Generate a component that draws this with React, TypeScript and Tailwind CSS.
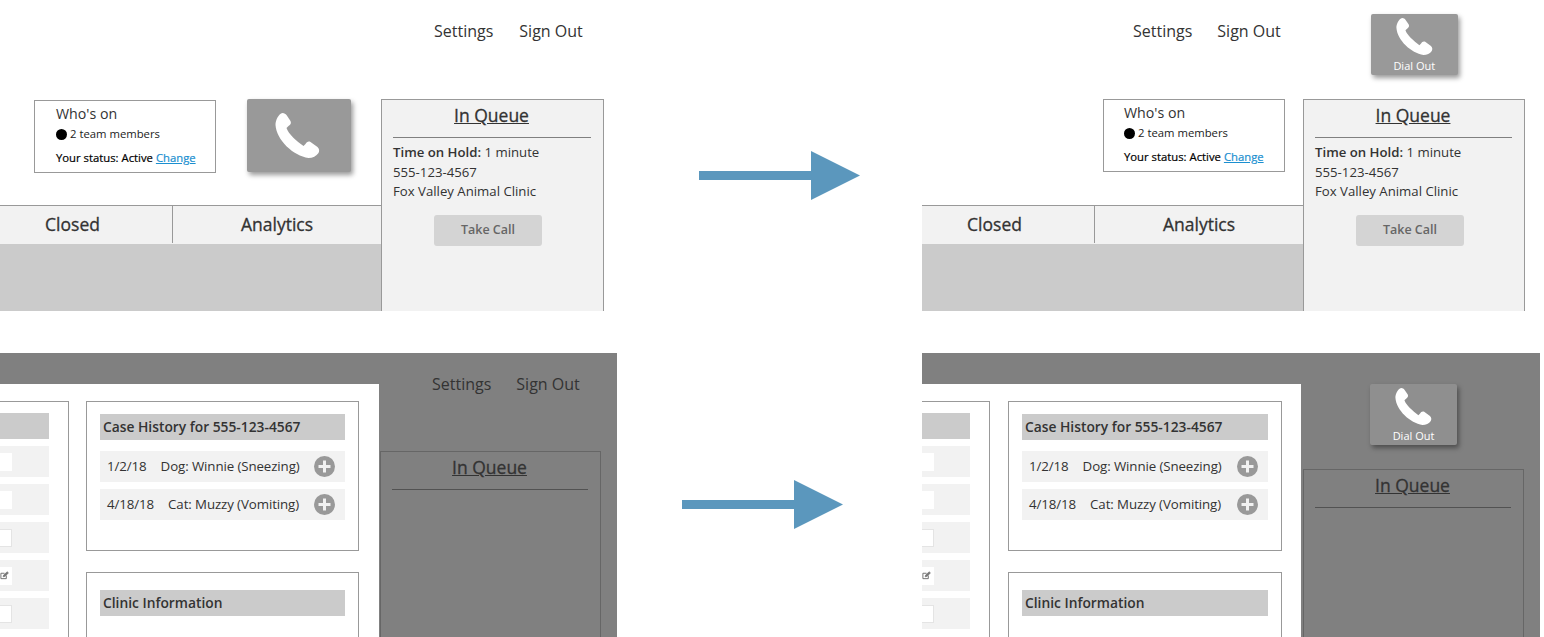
import React from "react";

const PhoneIcon = ({ className }: { className: string }) => (
  <svg viewBox="0 0 44 45" className={className} fill="currentColor">
    <path d="M7 0C9 0 10 1 11 2L15 8C16 10 15 12 13 13L11 15C13 21 21 28 28 33L30 31C31 29 33 28 35 29L42 34C44 36 44 38 43 40C41 43 37 45 33 45C18 43 1 27 0 12C0 7 3 1 7 0Z" />
  </svg>
);

const PlusIcon = () => (
  <svg viewBox="0 0 21 21" className="size-[21px] flex-none">
    <circle cx="10.5" cy="10.5" r="10.5" fill="#999999" />
    <path d="M9 4.5h3V9h4.5v3H12v4.5H9V12H4.5V9H9z" fill="#f2f2f2" />
  </svg>
);

const PencilIcon = () => (
  <svg viewBox="0 0 10 10" className="mr-[3px] size-[11px]" fill="none" stroke="#666666">
    <path d="M1 2.500h4M1 2.500v6h6V5" strokeWidth="1" />
    <path d="M3.500 6.500l.5-2L8 .8l1.400 1.400L5.500 6z" fill="#777777" strokeWidth="0.6" />
  </svg>
);

const Arrow = ({ className }: { className: string }) => (
  <svg viewBox="0 0 161 49" className={className}>
    <path d="M0 20h112V0l49 24.500-49 24.500V29H0z" fill="#5b97bd" />
  </svg>
);

const Nav = ({ className }: { className: string }) => (
  <div className={`flex text-[16px] leading-[22px] ${className}`}>
    <span>Settings</span>
    <span>Sign Out</span>
  </div>
);

const WhosOn = ({ className }: { className: string }) => (
  <div className={`h-[73px] flex-none border border-[#999999] bg-white pt-[3px] ${className}`}>
    <div className="text-[14.200px] leading-[20px] text-[#333333]">Who's on</div>
    <div className="mt-[2px] flex h-[16px] items-center gap-[3px] text-[11.300px] text-[#222222]">
      <span className="size-[11px] rounded-full bg-black" />
      2 team members
    </div>
    <div className="mt-[8px] text-[11.300px] leading-[16px] text-black [-webkit-text-stroke:0.2px]">
      Your status: Active{" "}
      <span className="text-[#1b8fd0] underline">Change</span>
    </div>
  </div>
);

const Tabs = () => (
  <>
    <div className="flex h-[40px] flex-none border-t border-b border-t-[#999999] border-b-[#cbcbcb] bg-[#f2f2f2] pb-px text-[17.500px] text-[#333333] [-webkit-text-stroke:0.3px]">
      <div className="flex w-[173px] items-center justify-center border-r border-[#999999] pr-[27px]">Closed</div>
      <div className="flex flex-1 items-center justify-center">Analytics</div>
    </div>
    <div className="flex-1 bg-[#cbcbcb]" />
  </>
);

const QueueTitle = () => (
  <>
    <div className="pr-[2px] text-center text-[17.500px] leading-[25px] underline [-webkit-text-stroke:0.3px]">In Queue</div>
    <div className="ml-[11px] mr-[12px] mt-[9px] border-t border-current opacity-60" />
  </>
);

const Queue = ({ className }: { className: string }) => (
  <div className={`h-[212px] flex-none border border-b-0 border-[#999999] bg-[#f2f2f2] pt-[3px] text-[#333333] ${className}`}>
    <QueueTitle />
    <div className="mt-[5px] pl-[11px] text-[13.200px] leading-[19.500px]">
      <div>
        <span className="font-semibold">Time on Hold:</span> 1 minute
      </div>
      <div>555-123-4567</div>
      <div>Fox Valley Animal Clinic</div>
    </div>
    <div className="ml-[52px] mt-[13px] flex h-[31px] w-[108px] items-center justify-center rounded-[3px] bg-[#d4d4d4] pt-px text-[12.500px] font-semibold text-[#666666]">
      Take Call
    </div>
  </div>
);

const DialOut = ({ tone, className }: { tone: string; className: string }) => (
  <div className={`flex h-[61px] w-[87px] flex-none flex-col items-center rounded-[2px] pt-[4px] text-white shadow-[2px_3px_5px_rgba(0,0,0,0.4)] ${tone} ${className}`}>
    <PhoneIcon className="h-[37px] w-[37px]" />
    <span className="mt-[3px] text-[11px] leading-[15px]">Dial Out</span>
  </div>
);

const caseRows = [
  { date: "1/2/18", name: "Dog: Winnie (Sneezing)" },
  { date: "4/18/18", name: "Cat: Muzzy (Vomiting)" },
];

const Bar = ({ children }: { children?: React.ReactNode }) => (
  <div className="flex h-[26px] items-center bg-[#cbcbcb] pl-[3px] text-[13.800px] font-semibold text-[#333333]">{children}</div>
);

const LeftCard = ({ className }: { className: string }) => (
  <div className={`mt-[17px] flex flex-none flex-col gap-[7px] border-t border-r border-[#999999] pr-[19px] pt-[11px] ${className}`}>
    <Bar />
    {[0, 1, 2, 3, 4].map((i) => (
      <div key={i} className="flex h-[31px] flex-none items-center bg-[#f2f2f2]">
        <div className={`flex h-[18px] w-[12px] items-center justify-end ${i % 2 === 0 && i > 0 ? "border border-l-0 border-[#e4e4e4] bg-white" : "bg-white"}`}>
          {i === 3 && <PencilIcon />}
        </div>
      </div>
    ))}
  </div>
);

const ModalBody = ({ leftClass, rightClass }: { leftClass: string; rightClass: string }) => (
  <div className="mt-[31px] flex h-[253px] w-[379px] flex-none overflow-hidden bg-white">
    <LeftCard className={leftClass} />
    <div className={`flex flex-none flex-col gap-[21px] pt-[17px] ${rightClass}`}>
      <div className="h-[150px] flex-none border border-[#999999] px-[13px] pt-[12px]">
        <Bar>Case History for 555-123-4567</Bar>
        <div className="mt-[11px] flex flex-col gap-[7px]">
          {caseRows.map((row) => (
            <div key={row.date} className="flex h-[31px] items-center justify-between bg-[#f2f2f2] pl-[7px] pr-[10px] text-[13.300px] tracking-[-0.1px] text-[#333333]">
              <span>
                {row.date}
                <span className="ml-[14px]">{row.name}</span>
              </span>
              <PlusIcon />
            </div>
          ))}
        </div>
      </div>
      <div className="h-[120px] flex-none border border-[#999999] px-[13px] pt-[17px]">
        <Bar>Clinic Information</Bar>
      </div>
    </div>
  </div>
);

export default function App() {
  return (
    <div className="grid h-[637px] w-[1544px] grid-cols-[617px_305px_622px] grid-rows-[311px_42px_284px] overflow-hidden bg-white font-['Open_Sans',sans-serif] text-[#333333]">
      {/* before, top */}
      <section className="flex flex-col">
        <Nav className="h-[99px] flex-none gap-[26px] pl-[434px] pt-[20px]" />
        <div className="flex flex-1">
          <div className="flex w-[381px] flex-none flex-col">
            <div className="flex h-[106px] flex-none gap-[31px] pl-[34px] pt-px">
              <WhosOn className="w-[182px] pl-[21px]" />
              <div className="flex h-[73px] w-[104px] -translate-y-px items-center justify-center rounded-[2px] bg-[#999999] pr-[3px] text-white shadow-[2px_3px_5px_rgba(0,0,0,0.4)]">
                <PhoneIcon className="h-[45px] w-[45px]" />
              </div>
            </div>
            <Tabs />
          </div>
          <Queue className="w-[223px]" />
        </div>
      </section>

      <div className="pl-[82px] pt-[151px]">
        <Arrow className="h-[49px] w-[161px]" />
      </div>

      {/* after, top */}
      <section className="flex flex-col">
        <div className="flex h-[99px] flex-none">
          <Nav className="ml-[211px] gap-[25px] pt-[20px]" />
          <DialOut tone="bg-[#999999]" className="ml-[90px] mt-[14px]" />
        </div>
        <div className="flex flex-1">
          <div className="flex w-[381px] flex-none flex-col">
            <div className="h-[106px] flex-none pl-[181px]">
              <WhosOn className="w-[182px] pl-[20px]" />
            </div>
            <Tabs />
          </div>
          <Queue className="w-[222px]" />
        </div>
      </section>

      <div className="col-span-3" />

      {/* before, dimmed */}
      <section className="flex bg-[#808080]">
        <ModalBody leftClass="mr-[17px] w-[69px]" rightClass="w-[273px]" />
        <div className="flex flex-1 flex-col pl-px text-[#333333]">
          <Nav className="h-[98px] flex-none gap-[25px] pl-[52px] pt-[20px]" />
          <div className="h-[186px] w-[221px] border border-b-0 border-[#666666] pt-[3px]">
            <QueueTitle />
          </div>
        </div>
      </section>

      <div className="pl-[65px] pt-[127px]">
        <Arrow className="h-[49px] w-[161px]" />
      </div>

      {/* after, dimmed */}
      <section className="flex w-[618px] bg-[#808080]">
        <ModalBody leftClass="mr-[18px] w-[68px]" rightClass="w-[274px]" />
        <div className="flex flex-1 flex-col pl-[2px]">
          <DialOut tone="bg-[#8f8f8f]" className="ml-[67px] mt-[31px]" />
          <div className="mt-[24px] h-[168px] w-[221px] border border-b-0 border-[#666666] pt-[3px]">
            <QueueTitle />
          </div>
        </div>
      </section>
    </div>
  );
}
